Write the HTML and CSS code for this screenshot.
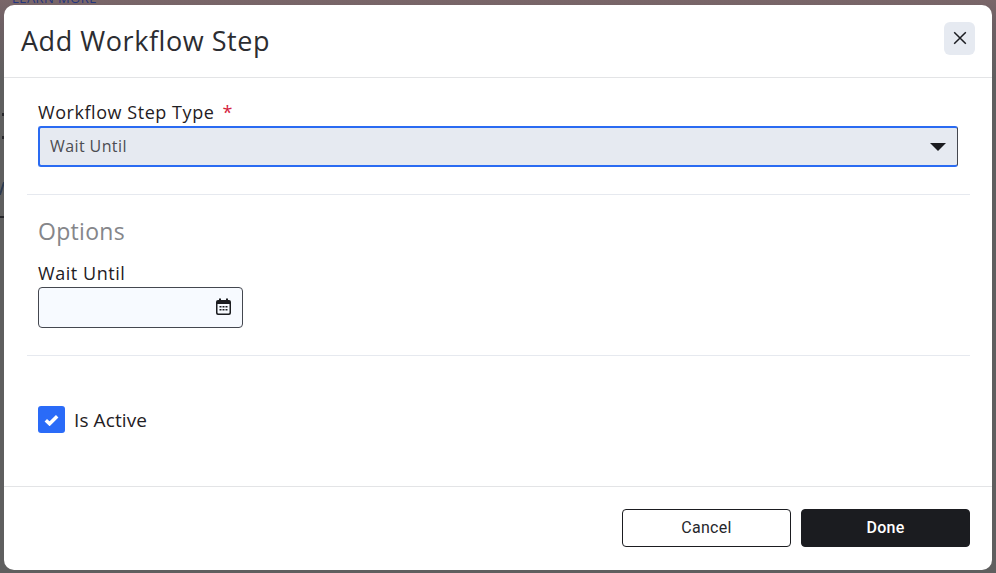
FILE: index.html
```html
<!DOCTYPE html>
<html>
<head>
  <title>Add Workflow Step</title>
  <link rel="stylesheet" href="styles.css">
</head>
<body>
  <div class="backdrop">
    <a class="learn-more">LEARN MORE</a>
    <span class="bg-mark mark-a"></span>
    <span class="bg-mark mark-b"></span>
    <span class="bg-mark mark-c"></span>
    <span class="bg-mark mark-d"></span>
  </div>

  <div class="modal">
    <div class="modal-header">
      <h2>Add Workflow Step</h2>
      <button class="close-btn" aria-label="Close">
        <svg width="14" height="14" viewBox="0 0 14 14"><path d="M1.2 1.2 L12.8 12.8 M12.8 1.2 L1.2 12.8" stroke="#1b1c20" stroke-width="1.5" fill="none"/></svg>
      </button>
    </div>

    <div class="modal-body">
      <div class="section section-type">
        <label class="field-label">Workflow Step Type <span class="required">*</span></label>
        <div class="select-box">
          <span>Wait Until</span>
          <svg width="16" height="8" viewBox="0 0 16 8"><path d="M0 0 H16 L8 8 Z" fill="#1b1c20"/></svg>
        </div>
      </div>

      <div class="section section-options">
        <h3>Options</h3>
        <label class="field-label">Wait Until</label>
        <div class="date-box">
          <svg class="date-icon" width="15" height="17" viewBox="0 0 15 17">
            <path d="M3 0.5 H5 V2 H10 V0.5 H12 V2 H13 A2 2 0 0 1 15 4 V15 A2 2 0 0 1 13 17 H2 A2 2 0 0 1 0 15 V4 A2 2 0 0 1 2 2 H3 Z M1.5 6 V14.5 A1 1 0 0 0 2.5 15.5 H12.5 A1 1 0 0 0 13.5 14.5 V6 Z" fill="#1b1c20"/>
            <path d="M3.5 8 H5.5 V9.5 H3.5 Z M6.5 8 H8.5 V9.5 H6.5 Z M9.5 8 H11.5 V9.5 H9.5 Z M3.5 11 H5.5 V12.5 H3.5 Z M6.5 11 H8.5 V12.5 H6.5 Z M9.5 11 H11.5 V12.5 H9.5 Z" fill="#1b1c20"/>
          </svg>
        </div>
      </div>

      <div class="active-row">
        <span class="checkbox">
          <svg width="15" height="12" viewBox="0 0 15 12"><path d="M1.8 6.2 L5.6 9.8 L13.2 2.2" stroke="#fff" stroke-width="3.5" fill="none"/></svg>
        </span>
        <span class="active-label">Is Active</span>
      </div>
    </div>

    <div class="modal-footer">
      <button class="btn btn-cancel">Cancel</button>
      <button class="btn btn-done">Done</button>
    </div>
  </div>
</body>
</html>
```

FILE: styles.css
```css
html, body {
  margin: 0;
  height: 100%;
  overflow: hidden;
}

body {
  background-color: #5f5f5f;
  font-family: "Open Sans", sans-serif;
  color: #1b1c20;
  padding: 5px 4px 3px;
  box-sizing: border-box;
}

.backdrop {
  position: absolute;
  top: 0;
  left: 0;
  width: 100%;
  height: 100%;
  background: linear-gradient(#7a6669 0, #6e6064 24px, #5f5f5f 80px);
}

.learn-more {
  position: absolute;
  top: -11px;
  left: 12px;
  font-size: 13px;
  letter-spacing: 0.45px;
  color: #24357f;
}

.bg-mark {
  position: absolute;
  left: 0;
  background-color: #26262a;
}

.mark-a { top: 113px; left: 2px; width: 2px; height: 3px; }
.mark-b { top: 136px; left: 2px; width: 2px; height: 3px; }
.mark-c { top: 182px; left: 1px; width: 2px; height: 13px; background-color: #2c3a50; transform: skewX(-18deg); }
.mark-d { top: 216px; width: 4px; height: 2px; }

.modal {
  position: relative;
  height: 565px;
  width: 988px;
  background-color: #fff;
  border-radius: 10px;
  display: flex;
  flex-direction: column;
}

.modal-header {
  height: 73px;
  flex-shrink: 0;
  box-sizing: border-box;
  border-bottom: 1px solid #e3e4e6;
  padding: 0 17px;
  display: flex;
  align-items: center;
  justify-content: space-between;
}

.modal-header h2 {
  margin: -2px 0 0;
  font-size: 27px;
  font-weight: 400;
  letter-spacing: 0.55px;
  color: #2c2d31;
}

.close-btn {
  width: 31px;
  height: 33px;
  border: none;
  border-radius: 6px;
  background-color: #e6eaf1;
  padding: 0;
  display: flex;
  align-items: center;
  justify-content: center;
  margin-top: -6px;
}

.modal-body {
  flex: 1;
  padding: 0 22px 0 23px;
}

.section {
  padding: 0 12px 0 11px;
  border-bottom: 1px solid #e6e9ef;
}

.section-type {
  height: 117px;
  padding-top: 23px;
  box-sizing: border-box;
}

.section-options {
  height: 161px;
  box-sizing: border-box;
  padding-top: 21px;
}

.field-label {
  display: block;
  font-size: 18px;
  font-weight: 500;
  line-height: 23px;
  letter-spacing: 0.55px;
  color: #1f2024;
}

.required {
  color: #d4213d;
  margin-left: 3px;
}

.select-box {
  height: 41px;
  margin-top: 2px;
  box-sizing: border-box;
  width: 920px;
  background-color: #e6eaf1;
  border: 2px solid #2a6bf2;
  border-right: 1px solid #44474f;
  border-radius: 3px;
  padding: 0 11px 0 10px;
  display: flex;
  align-items: center;
  justify-content: space-between;
  font-size: 16px;
  line-height: 20px;
  letter-spacing: 0.4px;
  color: #4c4d52;
}

.select-box span {
  margin-top: -2px;
}

.section-options h3 {
  margin: 0 0 16px;
  font-size: 23px;
  line-height: 30px;
  font-weight: 400;
  letter-spacing: 0.3px;
  color: #85868a;
}

.date-box {
  width: 205px;
  height: 41px;
  margin-top: 2px;
  box-sizing: border-box;
  background-color: #f7faff;
  border: 1px solid #44474f;
  border-radius: 4px;
  padding-right: 11px;
  display: flex;
  align-items: center;
  justify-content: flex-end;
}

.date-icon {
  margin-top: -3px;
}

.active-row {
  display: flex;
  align-items: center;
  gap: 9px;
  margin: 50px 0 0 11px;
}

.checkbox {
  width: 27px;
  height: 27px;
  border-radius: 3px;
  background-color: #2a6bf8;
  display: flex;
  align-items: center;
  justify-content: center;
}

.active-label {
  font-size: 19px;
  font-weight: 500;
  letter-spacing: 0.1px;
  color: #1f2024;
}

.modal-footer {
  height: 84px;
  flex-shrink: 0;
  box-sizing: border-box;
  border-top: 1px solid #e3e4e6;
  padding: 22px 22px 0 0;
  display: flex;
  justify-content: flex-end;
  gap: 10px;
}

.btn {
  width: 169px;
  height: 38px;
  box-sizing: border-box;
  border-radius: 4px;
  font-family: Roboto, sans-serif;
  font-size: 16px;
  letter-spacing: 0.3px;
  padding: 0 0 2px;
}

.btn-cancel {
  background-color: #fff;
  border: 1px solid #1b1c20;
  color: #26272b;
}

.btn-done {
  background-color: #1b1c20;
  border: 1px solid #1b1c20;
  color: #fff;
  font-weight: 500;
}
```
